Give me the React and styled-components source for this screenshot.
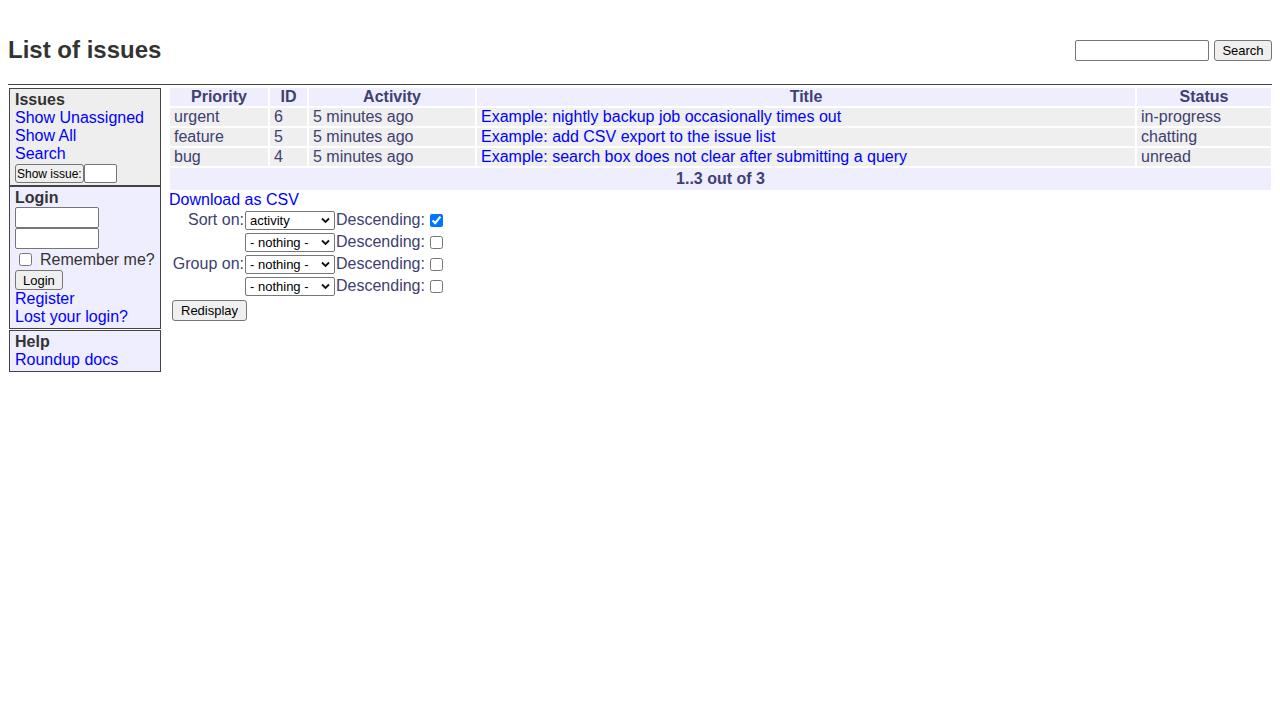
import React from 'react';
import styled, { createGlobalStyle } from 'styled-components';

const GlobalStyle = createGlobalStyle`
  body {
    margin: 8px;
    background: white;
    color: #333;
    font-family: "Liberation Sans", Helvetica, Arial, sans-serif;
    font-size: 16px;
    line-height: 18px;
  }
  a {
    color: blue;
    text-decoration: none;
  }
`;

const Header = styled.div`
  display: flex;
  justify-content: space-between;
  align-items: flex-start;
  height: 77px;
  box-sizing: border-box;
  border-bottom: 1px solid #444;
`;

const Title = styled.h2`
  margin: 28px 0 0;
  font-size: 24px;
  line-height: 28px;
  font-weight: bold;
  color: #333;
`;

const SearchForm = styled.form`
  display: flex;
  gap: 5px;
  margin: 32px 0 0;
`;

const TextInput = styled.input`
  box-sizing: border-box;
  width: ${(p) => p.$w || 84}px;
  height: ${(p) => p.$h || 21}px;
  margin: 0;
  padding: 1px 2px;
  border: 1px solid #767676;
  border-radius: 2px;
  background: white;
  font-family: "Liberation Sans", Arial, sans-serif;
  font-size: 13px;
  display: block;
`;

const Button = styled.button`
  box-sizing: border-box;
  height: ${(p) => p.$h || 20}px;
  margin: 0;
  padding: 0 ${(p) => p.$px || 6}px;
  border: 1px solid #767676;
  border-radius: 3px;
  background: #efefef;
  color: black;
  font-family: "Liberation Sans", Arial, sans-serif;
  font-size: ${(p) => p.$fs || 13}px;
  line-height: 1;
  white-space: nowrap;
`;

const Main = styled.div`
  display: flex;
  align-items: flex-start;
  gap: 8px;
`;

const Sidebar = styled.div`
  width: 152px;
  flex: none;
  padding: 3px 0 0 1px;
  white-space: nowrap;
`;

const Block = styled.div`
  box-sizing: border-box;
  width: 152px;
  margin-top: ${(p) => p.$gap || 0}px;
  padding: 2px 5px;
  border: 1px solid #444;
  background: ${(p) => p.$bg};
`;

const BlockTitle = styled.div`
  font-weight: bold;
  color: #333;
`;

const SideLink = styled.a`
  display: block;
`;

const ShowIssue = styled.form`
  display: flex;
  align-items: stretch;
  height: 19px;
  margin-top: 1px;
`;

const Remember = styled.label`
  display: flex;
  align-items: center;
  height: 21px;
  color: #333;
`;

const Check = styled.input.attrs({ type: 'checkbox' })`
  width: 13px;
  height: 13px;
  margin: 0 ${(p) => p.$mr ?? 8}px 0 ${(p) => p.$ml ?? 4}px;
  accent-color: #0075ff;
`;

const Content = styled.div`
  flex: 1;
  min-width: 0;
  padding-top: 2px;
  color: #404070;
`;

const List = styled.table`
  width: 100%;
  table-layout: fixed;
  border-spacing: 0;
  border-collapse: separate;
`;

const Th = styled.th`
  padding: 0 4px;
  border: 1px solid white;
  background: #eef;
  color: #404070;
  font-weight: bold;
  text-align: center;
  line-height: ${(p) => p.$lh || 18}px;
  white-space: nowrap;
`;

const Td = styled.td`
  padding: 0 4px;
  border: 1px solid white;
  background: #efefef;
  color: #404070;
  text-align: left;
  white-space: nowrap;
  overflow: hidden;
`;

const Controls = styled.div`
  display: grid;
  grid-template-columns: 76px 90px auto;
  grid-auto-rows: 22px;
  align-items: center;
  justify-content: start;
  color: #404070;
`;

const Label = styled.span`
  text-align: right;
  padding-right: 1px;
`;

const SelectWrap = styled.div`
  position: relative;
  width: 90px;
  height: 19px;
`;

const Select = styled.select`
  box-sizing: border-box;
  width: 100%;
  height: 100%;
  margin: 0;
  padding: 0 14px 0 4px;
  border: 1px solid #767676;
  border-radius: 2px;
  background: white;
  color: black;
  font-family: "Liberation Sans", Arial, sans-serif;
  font-size: 13px;
  appearance: none;
  -webkit-appearance: none;
`;

const Chevron = styled.svg`
  position: absolute;
  right: 5px;
  top: 6px;
  pointer-events: none;
`;

const Desc = styled.span`
  padding-left: 1px;
  display: flex;
  align-items: center;
`;

const Redisplay = styled.div`
  margin-top: 3px;
  padding-left: 3px;
`;

const issues = [
  { priority: 'urgent', id: 6, activity: '5 minutes ago', title: 'Example: nightly backup job occasionally times out', status: 'in-progress' },
  { priority: 'feature', id: 5, activity: '5 minutes ago', title: 'Example: add CSV export to the issue list', status: 'chatting' },
  { priority: 'bug', id: 4, activity: '5 minutes ago', title: 'Example: search box does not clear after submitting a query', status: 'unread' },
];

const sortRows = [
  { label: 'Sort on:', value: 'activity', desc: true },
  { label: '', value: 'nothing', desc: false },
  { label: 'Group on:', value: 'nothing', desc: false },
  { label: '', value: 'nothing', desc: false },
];

const FieldSelect = ({ value }) => (
  <SelectWrap>
    <Select defaultValue={value}>
      <option value="nothing">- nothing -</option>
      <option value="activity">activity</option>
      <option value="priority">priority</option>
      <option value="id">ID</option>
      <option value="title">title</option>
      <option value="status">status</option>
    </Select>
    <Chevron width="9" height="7" viewBox="0 0 9 7">
      <polyline points="1,1.5 4.5,5 8,1.5" fill="none" stroke="#111" strokeWidth="1.8" />
    </Chevron>
  </SelectWrap>
);

export default function App() {
  return (
    <>
      <GlobalStyle />
      <Header>
        <Title>List of issues</Title>
        <SearchForm onSubmit={(e) => e.preventDefault()}>
          <TextInput $w={134} />
          <Button $px={6} $h={21} style={{ width: 58 }}>Search</Button>
        </SearchForm>
      </Header>
      <Main>
        <Sidebar>
          <Block $bg="#eee">
            <BlockTitle>Issues</BlockTitle>
            <SideLink href="#">Show Unassigned</SideLink>
            <SideLink href="#">Show All</SideLink>
            <SideLink href="#">Search</SideLink>
            <ShowIssue onSubmit={(e) => e.preventDefault()}>
              <Button $fs={12} $px={1} $h={19}>Show issue:</Button>
              <TextInput $w={33} $h={19} />
            </ShowIssue>
          </Block>
          <Block $bg="#eef">
            <BlockTitle>Login</BlockTitle>
            <TextInput />
            <TextInput />
            <Remember>
              <Check />
              Remember me?
            </Remember>
            <Button $px={7}>Login</Button>
            <SideLink href="#">Register</SideLink>
            <SideLink href="#">Lost your login?</SideLink>
          </Block>
          <Block $bg="#eef" $gap={1}>
            <BlockTitle>Help</BlockTitle>
            <SideLink href="#">Roundup docs</SideLink>
          </Block>
        </Sidebar>
        <Content>
          <List>
            <colgroup>
              <col style={{ width: 100 }} />
              <col style={{ width: 39 }} />
              <col style={{ width: 168 }} />
              <col style={{ width: 660 }} />
              <col />
            </colgroup>
            <thead>
              <tr>
                <Th>Priority</Th>
                <Th>ID</Th>
                <Th>Activity</Th>
                <Th>Title</Th>
                <Th>Status</Th>
              </tr>
            </thead>
            <tbody>
              {issues.map((it) => (
                <tr key={it.id}>
                  <Td>{it.priority}</Td>
                  <Td>{it.id}</Td>
                  <Td>{it.activity}</Td>
                  <Td><a href="#">{it.title}</a></Td>
                  <Td>{it.status}</Td>
                </tr>
              ))}
              <tr>
                <Th colSpan={5} $lh={22}>1..3 out of 3</Th>
              </tr>
            </tbody>
          </List>
          <a href="#">Download as CSV</a>
          <Controls>
            {sortRows.map((r, i) => (
              <React.Fragment key={i}>
                <Label>{r.label}</Label>
                <FieldSelect value={r.value} />
                <Desc>
                  Descending:
                  <Check defaultChecked={r.desc} $ml={5} $mr={0} />
                </Desc>
              </React.Fragment>
            ))}
          </Controls>
          <Redisplay>
            <Button $h={21} $px={8}>Redisplay</Button>
          </Redisplay>
        </Content>
      </Main>
    </>
  );
}
